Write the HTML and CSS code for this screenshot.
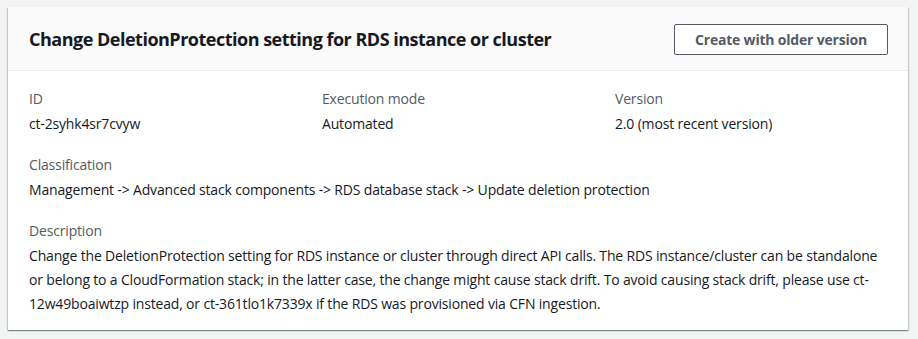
FILE: index.html
```html
<!DOCTYPE html>
<html>
<head>
<meta charset="utf-8">
<link rel="stylesheet" href="styles.css">
</head>
<body>
<div class="card">
  <div class="card-header">
    <h2 class="title">Change DeletionProtection setting for RDS instance or cluster</h2>
    <button class="btn">Create with older version</button>
  </div>
  <div class="card-body">
    <div class="cols">
      <div class="field">
        <div class="label">ID</div>
        <div class="value">ct-2syhk4sr7cvyw</div>
      </div>
      <div class="field">
        <div class="label">Execution mode</div>
        <div class="value">Automated</div>
      </div>
      <div class="field">
        <div class="label">Version</div>
        <div class="value">2.0 (most recent version)</div>
      </div>
    </div>
    <div class="field">
      <div class="label">Classification</div>
      <div class="value">Management -&gt; Advanced stack components -&gt; RDS database stack -&gt; Update deletion protection</div>
    </div>
    <div class="field">
      <div class="label">Description</div>
      <div class="value">Change the DeletionProtection setting for RDS instance or cluster through direct API calls. The RDS instance/cluster can be standalone or belong to a CloudFormation stack; in the latter case, the change might cause stack drift. To avoid causing stack drift, please use ct-12w49boaiwtzp instead, or ct-361tlo1k7339x if the RDS was provisioned via CFN ingestion.</div>
    </div>
  </div>
</div>
</body>
</html>
```
FILE: styles.css
```css
html, body {
  margin: 0;
  padding: 0;
  background: #f2f3f3;
}
body {
  padding: 7px 10px 9px 8px;
  font-family: "Open Sans", "Noto Sans", sans-serif;
  font-size: 14px;
  color: #16191f;
  letter-spacing: -0.17px;
}
.card {
  background: #ffffff;
  box-shadow: 0 1px 1px 0 rgba(0, 28, 36, 0.3), 1px 1px 1px 0 rgba(0, 28, 36, 0.15), -1px 1px 1px 0 rgba(0, 28, 36, 0.15);
  height: 323px;
  box-sizing: border-box;
}
.card-header {
  background: #fafafa;
  border-bottom: 1px solid #eaeded;
  height: 64px;
  box-sizing: border-box;
  display: flex;
  align-items: center;
  justify-content: space-between;
  padding: 0 20px 0 21px;
}
.title {
  margin: 0;
  font-size: 18px;
  font-weight: 700;
  color: #16191f;
  letter-spacing: -0.5px;
}
.btn {
  width: 214px;
  height: 31px;
  margin-top: 1px;
  background: #ffffff;
  border: 1px solid #545b64;
  border-radius: 2px;
  font-family: inherit;
  font-size: 14px;
  font-weight: 700;
  color: #545b64;
  letter-spacing: -0.2px;
  padding: 0;
}
.card-body {
  padding: 16px 20px 0 21px;
  display: flex;
  flex-direction: column;
  gap: 17px;
}
.cols {
  display: grid;
  grid-template-columns: 1fr 1fr 1fr;
  column-gap: 20px;
}
.label {
  color: #545b64;
  line-height: 24px;
}
.value {
  line-height: 24px;
  margin-top: 1px;
}
```
